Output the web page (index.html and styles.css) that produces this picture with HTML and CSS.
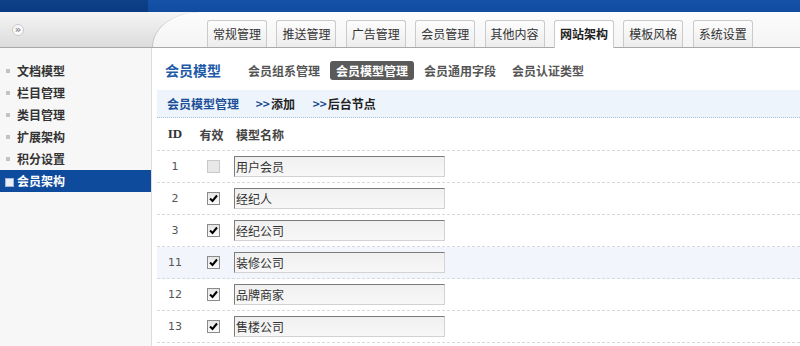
FILE: index.html
```html
<!DOCTYPE html>
<html lang="zh-CN">
<head>
<meta charset="utf-8">
<title>会员模型管理</title>
<link rel="stylesheet" href="styles.css">
</head>
<body>
<div class="topbar"><div class="topbar-left"></div><div class="topbar-right"></div></div>
<div class="header">
  <div class="header-left"><span class="toggle">»</span></div>
  <div class="header-right">
    <nav class="tabs">
      <a class="tab">常规管理</a>
      <a class="tab">推送管理</a>
      <a class="tab">广告管理</a>
      <a class="tab">会员管理</a>
      <a class="tab">其他内容</a>
      <a class="tab tab-active">网站架构</a>
      <a class="tab">模板风格</a>
      <a class="tab">系统设置</a>
    </nav>
  </div>
</div>
<div class="main">
  <aside class="sidebar">
    <ul class="menu">
      <li class="menu-item">文档模型</li>
      <li class="menu-item">栏目管理</li>
      <li class="menu-item">类目管理</li>
      <li class="menu-item">扩展架构</li>
      <li class="menu-item">积分设置</li>
      <li class="menu-item menu-active">会员架构</li>
    </ul>
  </aside>
  <section class="content">
    <div class="content-head">
      <h2 class="content-title">会员模型</h2>
      <nav class="subtabs">
        <a class="subtab">会员组系管理</a>
        <a class="subtab subtab-active">会员模型管理</a>
        <a class="subtab">会员通用字段</a>
        <a class="subtab">会员认证类型</a>
      </nav>
    </div>
    <div class="infobar">
      <span class="info-title">会员模型管理</span>
      <a class="info-link info-add"><span class="arrows">&gt;&gt;</span>添加</a>
      <a class="info-link"><span class="arrows">&gt;&gt;</span>后台节点</a>
    </div>
    <div class="grid">
      <div class="row row-head">
        <span class="c-id head-id">ID</span>
        <span class="c-cb">有效</span>
        <span class="c-name">模型名称</span>
      </div>
      <div class="row">
        <span class="c-id">1</span>
        <span class="c-cb"><span class="cb cb-disabled"></span></span>
        <span class="c-name"><input class="field" type="text" value="用户会员" readonly></span>
      </div>
      <div class="row">
        <span class="c-id">2</span>
        <span class="c-cb"><span class="cb"><svg viewBox="0 0 11 11" width="11" height="11"><path d="M2 5.5 L4.5 8 L9 2.5" fill="none" stroke="#000" stroke-width="2"/></svg></span></span>
        <span class="c-name"><input class="field" type="text" value="经纪人" readonly></span>
      </div>
      <div class="row">
        <span class="c-id">3</span>
        <span class="c-cb"><span class="cb"><svg viewBox="0 0 11 11" width="11" height="11"><path d="M2 5.5 L4.5 8 L9 2.5" fill="none" stroke="#000" stroke-width="2"/></svg></span></span>
        <span class="c-name"><input class="field" type="text" value="经纪公司" readonly></span>
      </div>
      <div class="row row-hover">
        <span class="c-id">11</span>
        <span class="c-cb"><span class="cb"><svg viewBox="0 0 11 11" width="11" height="11"><path d="M2 5.5 L4.5 8 L9 2.5" fill="none" stroke="#000" stroke-width="2"/></svg></span></span>
        <span class="c-name"><input class="field" type="text" value="装修公司" readonly></span>
      </div>
      <div class="row">
        <span class="c-id">12</span>
        <span class="c-cb"><span class="cb"><svg viewBox="0 0 11 11" width="11" height="11"><path d="M2 5.5 L4.5 8 L9 2.5" fill="none" stroke="#000" stroke-width="2"/></svg></span></span>
        <span class="c-name"><input class="field" type="text" value="品牌商家" readonly></span>
      </div>
      <div class="row">
        <span class="c-id">13</span>
        <span class="c-cb"><span class="cb"><svg viewBox="0 0 11 11" width="11" height="11"><path d="M2 5.5 L4.5 8 L9 2.5" fill="none" stroke="#000" stroke-width="2"/></svg></span></span>
        <span class="c-name"><input class="field" type="text" value="售楼公司" readonly></span>
      </div>
    </div>
  </section>
</div>
</body>
</html>
```

FILE: styles.css
```css
* { box-sizing: border-box; }
html, body { margin: 0; padding: 0; }
body {
  font-family: "Noto Sans CJK SC", "Noto Sans", sans-serif;
  font-size: 12px;
  color: #333;
  background: #fff;
  overflow: hidden;
}
a { text-decoration: none; color: inherit; }
ul { list-style: none; margin: 0; padding: 0; }
h2 { margin: 0; }

/* top blue strip */
.topbar { display: flex; height: 12px; }
.topbar-left { width: 148px; background: linear-gradient(#0e4189, #0a3a80); }
.topbar-right { flex: 1; background: linear-gradient(#1552a8, #114c9f); }

/* header */
.header {
  display: flex;
  height: 36px;
  border-bottom: 1px solid #a9a9a9;
  background: linear-gradient(#f5f5f5, #dcdcdc);
}
.header-left {
  width: 152px;
  display: flex;
  align-items: center;
  padding-left: 12px;
}
.toggle {
  width: 12px;
  height: 12px;
  border-radius: 50%;
  border: 1px solid #c9c9c9;
  background: #fafafa;
  color: #8a8a8a;
  font-size: 10px;
  line-height: 9px;
  text-align: center;
  font-family: "DejaVu Sans", sans-serif;
  font-weight: bold;
}
.header-right {
  flex: 1;
  background: linear-gradient(#fcfcfc, #f4f4f4);
  border-top-left-radius: 48px 35px;
  border-left: 1px solid #c4c4c4;
  display: flex;
  align-items: flex-end;
  padding-left: 54px;
}
.tabs { display: flex; gap: 9.4px; }
.tab {
  width: 60px;
  height: 27px;
  border: 1px solid #cacaca;
  border-bottom: 0;
  border-radius: 3px 3px 0 0;
  background: linear-gradient(#fdfdfd, #ececec);
  text-align: center;
  line-height: 26px;
  font-size: 12px;
  color: #333;
}
.tab-active {
  background: #fff;
  font-weight: bold;
  height: 28px;
  margin-bottom: -1px;
  color: #222;
}

/* main */
.main { display: flex; height: 298px; }
.sidebar {
  width: 152px;
  background: #f7f7f7;
  border-right: 1px solid #dcdcdc;
  padding-top: 12px;
}
.menu-item {
  position: relative;
  height: 22px;
  line-height: 22px;
  padding-left: 17px;
  font-weight: bold;
  color: #333;
}
.menu-item::before {
  content: "";
  position: absolute;
  left: 6px;
  top: 9px;
  width: 4px;
  height: 4px;
  background: #c4c4c4;
}
.menu-active {
  background: #0f4b9c;
  color: #fff;
}
.menu-active::before {
  left: 5px;
  top: 8px;
  width: 7px;
  height: 7px;
  background: #e9eef6;
  border: 1px solid #9fb4d6;
}

/* content */
.content { flex: 1; }
.content-head {
  display: flex;
  align-items: center;
  height: 20px;
  margin-top: 12px;
  padding-left: 13px;
}
.content-title {
  font-size: 14px;
  font-weight: bold;
  color: #1d5aa8;
  margin-right: 21px;
}
.subtabs { display: flex; gap: 4px; }
.subtab {
  height: 19px;
  line-height: 19px;
  padding: 0 6px;
  font-weight: bold;
  color: #555;
  border-radius: 3px;
}
.subtab-active { background: #5a5a5a; color: #fff; }

.infobar {
  margin: 10px 0 0 5px;
  height: 28px;
  line-height: 27px;
  padding-left: 10px;
  background: #eef4fc;
  border-bottom: 1px dotted #a8bedd;
  font-weight: bold;
}
.info-title { color: #1c4f98; margin-right: 14px; }
.info-link { color: #222; }
.info-add { margin-right: 15px; }
.arrows { color: #1c4f98; margin-right: 1px; }

.grid { margin-left: 5px; }
.row {
  display: grid;
  grid-template-columns: 36px 41px 1fr;
  align-items: center;
  height: 32px;
  border-bottom: 1px dashed #d6d9de;
}
.row-head { height: 33px; font-weight: bold; color: #444; }
.row-hover { background: #f2f6fc; }
.c-id {
  text-align: center;
  font-family: "DejaVu Sans", sans-serif;
  font-size: 11px;
  color: #555;
}
.head-id { font-family: "Liberation Serif", serif; font-size: 13px; color: #333; }
.c-cb { display: flex; justify-content: center; }
.row-head .c-cb { padding-right: 4px; }
.c-name { display: flex; }
.cb {
  width: 13px;
  height: 13px;
  border: 1px solid #8a8a8a;
  background: linear-gradient(#e6e6e6, #fbfbfb);
  display: flex;
  align-items: center;
  justify-content: center;
}
.cb-disabled { border-color: #c9c9c9; background: #e8e8e8; }
.field {
  width: 211px;
  height: 21px;
  border: 1px solid;
  border-color: #7c7c7c #d2d2d2 #d2d2d2 #7c7c7c;
  background: linear-gradient(#f0f0f0, #f7f7f7);
  font-family: "Noto Sans CJK SC", sans-serif;
  font-size: 12px;
  color: #333;
  padding: 0 1px;
  margin: 0;
  outline: none;
}
.row-head .c-name { padding-left: 2px; }
```
